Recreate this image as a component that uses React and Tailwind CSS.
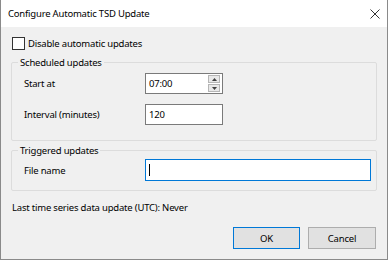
import React from 'react';

const font = { fontFamily: '"Noto Sans", "Liberation Sans", sans-serif' };

function Spinner() {
  return (
    <div className="flex flex-col gap-[1px] w-[12px] h-[17px] mr-[2px]">
      <div className="flex-1 flex items-center justify-center bg-[#e8e8e8] border border-[#b5b5b5]">
        <svg width="5" height="3" viewBox="0 0 5 3"><path d="M0 3 L2.5 0 L5 3 Z" fill="#404040" /></svg>
      </div>
      <div className="flex-1 flex items-center justify-center bg-[#e8e8e8] border border-[#b5b5b5]">
        <svg width="5" height="3" viewBox="0 0 5 3"><path d="M0 0 L2.5 3 L5 0 Z" fill="#404040" /></svg>
      </div>
    </div>
  );
}

function Row({ label, children, className = '' }) {
  return (
    <div className={`flex items-center pl-[12px] ${className}`}>
      <span className="w-[121px]">{label}</span>
      {children}
    </div>
  );
}

export default function App() {
  return (
    <div className="w-[388px] h-[260px] flex flex-col border-x border-b border-[#8a8a8a] text-[9.5px] leading-[13px] tracking-[-0.2px] text-black overflow-hidden" style={font}>
      <div className="h-[27px] bg-white flex items-center justify-between pl-[7px] pr-[7px] shrink-0">
        <span className="text-[9.5px]">Configure Automatic TSD Update</span>
        <svg width="10" height="10" viewBox="0 0 10 10"><path d="M0.5 0.5 L9.5 9.5 M9.5 0.5 L0.5 9.5" stroke="#333" strokeWidth="1" /></svg>
      </div>
      <div className="flex-1 bg-[#f0f0f0] px-[10px] flex flex-col">
        <label className="flex items-center gap-[3px] mt-[10px] ml-[1px] h-[13px]">
          <span className="w-[13px] h-[13px] bg-white border border-[#333]" />
          <span>Disable automatic updates</span>
        </label>

        <fieldset className="mt-[6px] border border-[#dcdcdc] rounded-[2px] h-[85px]">
          <legend className="ml-[6px] px-[2px]">Scheduled updates</legend>
          <Row label="Start at" className="mt-[4px]">
            <div className="w-[78px] h-[21px] bg-white border border-[#7a7a7a] flex items-center justify-between pl-[3px]">
              <span>07:00</span>
              <Spinner />
            </div>
          </Row>
          <Row label="Interval (minutes)" className="mt-[10px]">
            <div className="w-[78px] h-[21px] bg-white border border-[#7a7a7a] flex items-center pl-[3px]">
              <span>120</span>
            </div>
          </Row>
        </fieldset>

        <fieldset className="mt-[3px] border border-[#dcdcdc] rounded-[2px] h-[47px]">
          <legend className="ml-[6px] px-[2px]">Triggered updates</legend>
          <Row label="File name" className="mt-[2px]">
            <div className="w-[226px] h-[22px] bg-white border border-[#0078d7] flex items-center pl-[3px]">
              <span className="w-[1px] h-[12px] bg-black" />
            </div>
          </Row>
        </fieldset>

        <div className="mt-[10px] ml-[1px]">Last time series data update (UTC): Never</div>

        <div className="flex justify-end gap-[8px] mt-[13px] mr-[1px]">
          <button type="button" className="w-[67px] h-[22px] bg-[#e1e1e1] border border-[#0078d7]">OK</button>
          <button type="button" className="w-[68px] h-[22px] bg-[#e1e1e1] border border-[#adadad]">Cancel</button>
        </div>
      </div>
    </div>
  );
}
